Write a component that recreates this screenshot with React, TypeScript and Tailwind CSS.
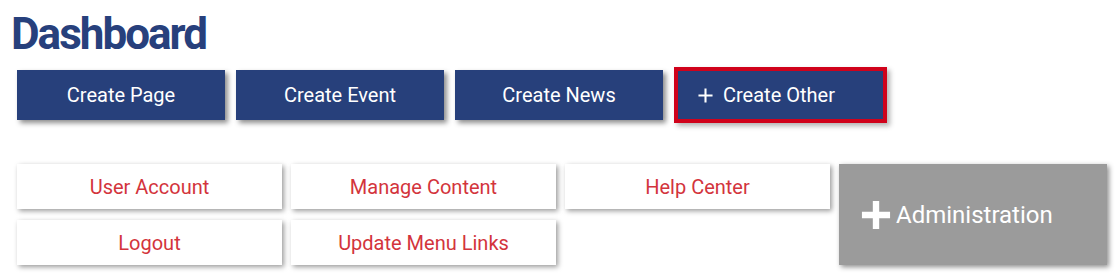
const primary = ['Create Page', 'Create Event', 'Create News'];

const links = [
  ['User Account', 'Manage Content', 'Help Center'],
  ['Logout', 'Update Menu Links'],
];

const PlusIcon = ({ className, width = 2.2 }: { className: string; width?: number }) => (
  <svg viewBox="0 0 16 16" className={className} fill="none" stroke="currentColor" strokeWidth={width}>
    <path d="M8 0.5v15M0.5 8h15" />
  </svg>
);

const App = () => {
  return (
    <div className="min-h-screen bg-white pl-[17px] pt-[12px] font-['Roboto',sans-serif]">
      <h1 className="-ml-[6px] text-[44px] font-bold leading-[44px] tracking-[-2px] text-[#27407c]">Dashboard</h1>

      <div className="mt-[11px] flex items-center gap-[11px]">
        {primary.map(label => (
          <button
            key={label}
            className="h-[50px] w-[208px] bg-[#27407b] text-[20px] text-white shadow-[3px_3px_5px_rgba(0,0,0,0.45)]"
          >
            {label}
          </button>
        ))}
        <button className="flex h-[56px] w-[213px] items-center border-[4px] border-[#d0021b] bg-[#27407b] pl-[20px] text-[20px] text-white shadow-[3px_3px_5px_rgba(0,0,0,0.3)]">
          <PlusIcon className="mr-[10px] h-[15px] w-[15px]" />
          Create Other
        </button>
      </div>

      <div className="mt-[41px] grid grid-cols-[265px_265px_265px_268px] grid-rows-[45px_45px] gap-x-[9px] gap-y-[11px]">
        {links[0].map(label => (
          <a
            key={label}
            href="#"
            className="flex items-center justify-center bg-white text-[20px] text-[#d3343c] shadow-[2px_2px_5px_rgba(0,0,0,0.4)]"
          >
            {label}
          </a>
        ))}
        <a
          href="#"
          className="row-span-2 flex items-center bg-[#9b9b9b] pl-[22px] text-[24px] text-white shadow-[2px_2px_5px_rgba(0,0,0,0.45)]"
        >
          <PlusIcon className="mr-[5px] h-[30px] w-[30px]" width={3.4} />
          Administration
        </a>
        {links[1].map(label => (
          <a
            key={label}
            href="#"
            className="flex items-center justify-center bg-white text-[20px] text-[#d3343c] shadow-[2px_2px_5px_rgba(0,0,0,0.4)]"
          >
            {label}
          </a>
        ))}
      </div>
    </div>
  );
};

export default App;
